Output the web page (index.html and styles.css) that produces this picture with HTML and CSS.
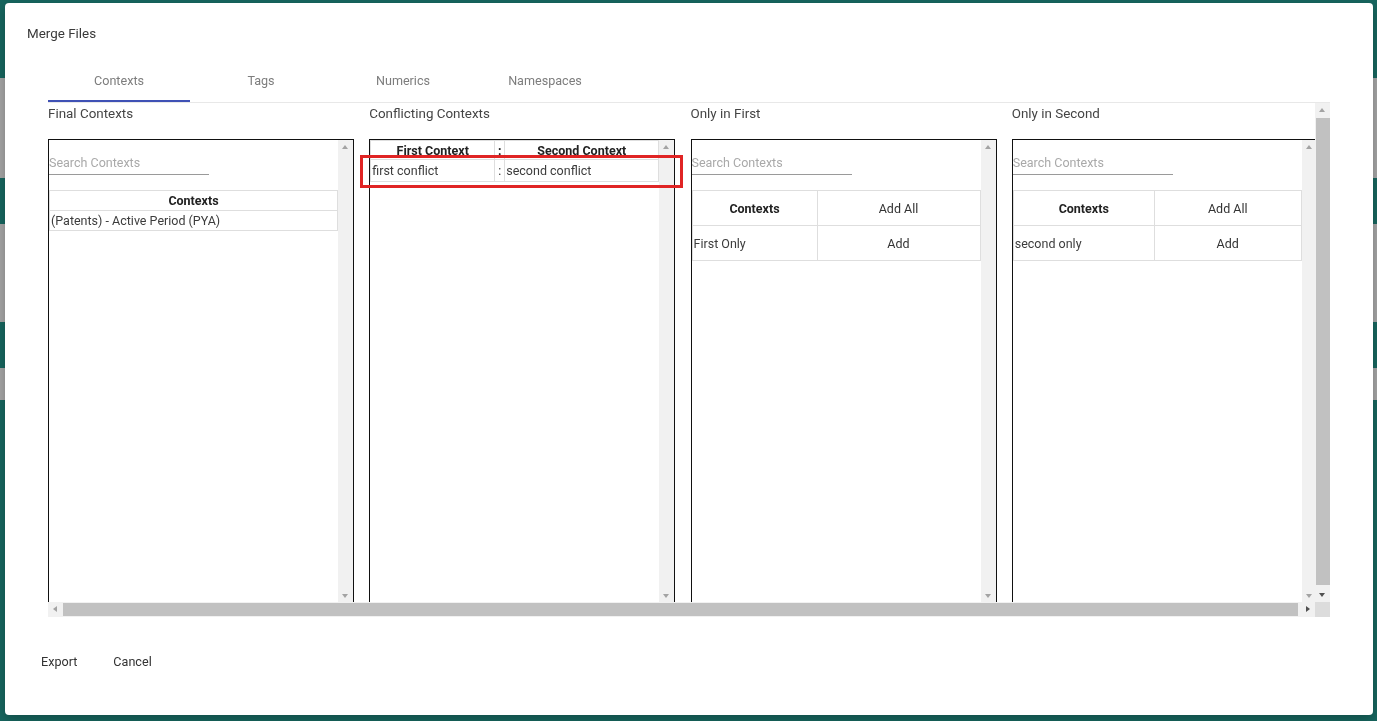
FILE: index.html
```html
<!DOCTYPE html>
<html lang="en">
<head>
<meta charset="utf-8">
<title>Merge Files</title>
<link rel="stylesheet" href="styles.css">
</head>
<body>
<div class="page">
  <div class="band teal b1"></div>
  <div class="band grey b2"></div>
  <div class="band teal b3"></div>
  <div class="band grey b4"></div>
  <div class="band teal b5"></div>
  <div class="band grey b6"></div>
  <div class="band teal b7"></div>
</div>

<div class="dialog">
  <h2 class="title">Merge Files</h2>
  <div class="dialog-body">
    <div class="tabs">
      <div class="tab active">Contexts</div>
      <div class="tab">Tags</div>
      <div class="tab">Numerics</div>
      <div class="tab">Namespaces</div>
    </div>
    <div class="scroller">
      <div class="viewport">
        <div class="cols">
          <section class="col">
            <div class="col-label">Final Contexts</div>
            <div class="box">
              <div class="box-content">
                <input class="search" type="text" placeholder="Search Contexts">
                <table class="grid final">
                  <thead><tr><th>Contexts</th></tr></thead>
                  <tbody><tr><td>(Patents) - Active Period (PYA)</td></tr></tbody>
                </table>
              </div>
              <div class="vbar"><span class="arr up off"></span><span class="track"></span><span class="arr down off"></span></div>
            </div>
          </section>
          <section class="col">
            <div class="col-label">Conflicting Contexts</div>
            <div class="box">
              <div class="box-content">
                <table class="grid conflict">
                  <thead><tr><th class="c-first">First Context</th><th class="c-sep">:</th><th class="c-second">Second Context</th></tr></thead>
                  <tbody><tr><td>first conflict</td><td class="sep">:</td><td>second conflict</td></tr></tbody>
                </table>
              </div>
              <div class="vbar"><span class="arr up off"></span><span class="track"></span><span class="arr down off"></span></div>
            </div>
          </section>
          <section class="col">
            <div class="col-label">Only in First</div>
            <div class="box">
              <div class="box-content">
                <input class="search" type="text" placeholder="Search Contexts">
                <table class="grid side side-first">
                  <thead><tr><th>Contexts</th><th><button class="link-btn">Add All</button></th></tr></thead>
                  <tbody><tr><td>First Only</td><td class="center"><button class="link-btn">Add</button></td></tr></tbody>
                </table>
              </div>
              <div class="vbar"><span class="arr up off"></span><span class="track"></span><span class="arr down off"></span></div>
            </div>
          </section>
          <section class="col">
            <div class="col-label">Only in Second</div>
            <div class="box">
              <div class="box-content">
                <input class="search" type="text" placeholder="Search Contexts">
                <table class="grid side side-second">
                  <thead><tr><th>Contexts</th><th><button class="link-btn">Add All</button></th></tr></thead>
                  <tbody><tr><td>second only</td><td class="center"><button class="link-btn">Add</button></td></tr></tbody>
                </table>
              </div>
              <div class="vbar"><span class="arr up off"></span><span class="track"></span><span class="arr down off"></span></div>
            </div>
          </section>
          <div class="highlight"></div>
        </div>
      </div>
      <div class="vbar outer"><span class="arr up off"></span><span class="track"><span class="thumb vthumb"></span></span><span class="arr down"></span></div>
      <div class="hbar"><span class="arr left off"></span><span class="track"><span class="thumb hthumb"></span></span><span class="arr right"></span></div>
      <div class="corner"></div>
    </div>
  </div>
  <div class="actions">
    <button class="action">Export</button>
    <button class="action">Cancel</button>
  </div>
</div>
</body>
</html>
```
FILE: styles.css
```css
* { box-sizing: border-box; }
html, body { margin: 0; padding: 0; height: 100%; overflow: hidden; }
body {
  font-family: Roboto, "Liberation Sans", Arial, sans-serif;
  color: #333;
}

.page { display: flex; flex-direction: column; height: 721px; }
.band { flex: 0 0 auto; }
.teal { background: #17665f; }
.grey { background: #a6a6a6; }
.b1 { height: 78px; }
.b2 { height: 100px; }
.b3 { height: 46px; }
.b4 { height: 98px; }
.b5 { height: 46px; }
.b6 { height: 32px; }
.b7 { flex: 1 1 auto; }

.dialog {
  position: fixed;
  left: 5px;
  top: 3px;
  width: 1368px;
  height: 712px;
  background: #fff;
  border-radius: 4px;
  box-shadow: 0 4px 12px rgba(0,0,0,0.25);
  padding: 21px 22px 0 22px;
}

.title {
  margin: 0;
  font-size: 13.4px;
  line-height: 20px;
  font-weight: 400;
  color: #3a3a3a;
}

.dialog-body { margin: 14px 21px 0 21px; }

.tabs {
  display: flex;
  height: 45px;
  border-bottom: 1px solid #e8e8e8;
}
.tab {
  width: 142px;
  height: 44px;
  display: flex;
  align-items: center;
  justify-content: center;
  font-size: 12.6px;
  color: #7d7d7d;
  position: relative;
}
.tab.active::after {
  content: "";
  position: absolute;
  left: 0;
  right: 0;
  bottom: 0;
  height: 2px;
  background: #3f51b5;
}

/* outer scroll area with drawn scrollbars */
.scroller {
  height: 514px;
  display: grid;
  grid-template-columns: 1fr 15px;
  grid-template-rows: 1fr 15px;
}
.viewport { overflow: hidden; min-width: 0; min-height: 0; }
.cols {
  position: relative;
  display: flex;
  width: 1285px;
  padding: 1px 0 16px 0;
}
.col { flex: 1 1 0; }
.col-label {
  font-size: 13.4px;
  line-height: 20px;
  color: #444;
  margin-bottom: 15px;
}
.box {
  width: 306px;
  height: 465px;
  border: 1px solid #111;
  display: flex;
}
.box-content { flex: 1 1 auto; min-width: 0; overflow: hidden; }

/* scrollbars */
.vbar, .hbar {
  display: flex;
  background: #f1f1f1;
}
.vbar { flex-direction: column; width: 15px; flex: 0 0 15px; }
.hbar { flex-direction: row; height: 15px; }
.track { flex: 1 1 auto; display: flex; }
.vbar .track { flex-direction: column; }
.thumb { background: #c1c1c1; display: block; }
.vthumb { width: 15px; height: 467px; margin: 0 0 0 0; }
.vbar.outer .thumb { width: 14px; margin-left: 1px; }
.hthumb { height: 13px; width: 1235px; margin-top: 1px; }
.arr {
  flex: 0 0 15px;
  width: 15px;
  height: 15px;
  position: relative;
}
.arr::after {
  content: "";
  position: absolute;
  width: 0;
  height: 0;
}
.arr.up::after {
  left: 4px; top: 5px;
  border-left: 3.5px solid transparent;
  border-right: 3.5px solid transparent;
  border-bottom: 4px solid #505050;
}
.arr.down::after {
  left: 4px; top: 6px;
  border-left: 3.5px solid transparent;
  border-right: 3.5px solid transparent;
  border-top: 4px solid #505050;
}
.arr.left::after {
  left: 5px; top: 4px;
  border-top: 3.5px solid transparent;
  border-bottom: 3.5px solid transparent;
  border-right: 4px solid #505050;
}
.arr.right::after {
  left: 6px; top: 4px;
  border-top: 3.5px solid transparent;
  border-bottom: 3.5px solid transparent;
  border-left: 4px solid #505050;
}
.arr.off.up::after { border-bottom-color: #a3a3a3; }
.arr.off.down::after { border-top-color: #a3a3a3; }
.arr.off.left::after { border-right-color: #a3a3a3; }
.corner { background: #dcdcdc; }

/* content */
.search {
  display: block;
  width: 160px;
  height: 25px;
  margin: 10px 0 15px 0;
  padding: 0;
  border: none;
  border-bottom: 1px solid #9a9a9a;
  font-family: inherit;
  font-size: 12.5px;
  color: #333;
  outline: none;
  background: transparent;
}
.search::placeholder { color: #a9a9a9; }

.grid {
  width: 100%;
  border-collapse: collapse;
  font-size: 12.5px;
  color: #3c3c3c;
}
.grid th, .grid td {
  border: 1px solid #dedede;
  padding: 0 1px;
  height: 20px;
}
.grid th {
  font-weight: 700;
  color: #222;
  text-align: center;
}
.grid td { text-align: left; }

.conflict th { height: 19px; }
.conflict td { height: 22px; }
.c-first { width: 124px; }
.c-sep { width: 10px; }
.conflict .sep { text-align: center; }

.side th, .side td { height: 35px; }
.side-first th:first-child { width: 125px; }
.side-second th:first-child { width: 141px; }
.grid .center { text-align: center; }
.link-btn {
  border: none;
  background: none;
  font-family: inherit;
  font-size: 12.5px;
  color: #333;
  padding: 0;
  font-weight: 400;
}

.highlight {
  position: absolute;
  left: 312px;
  top: 52px;
  width: 323px;
  height: 33px;
  border: 3px solid #e02424;
  pointer-events: none;
}

.actions {
  display: flex;
  gap: 8px;
  margin-top: 26px;
}
.action {
  height: 36px;
  padding: 0 14px;
  border: none;
  background: none;
  font-family: inherit;
  font-size: 12.6px;
  color: #333;
}
```
